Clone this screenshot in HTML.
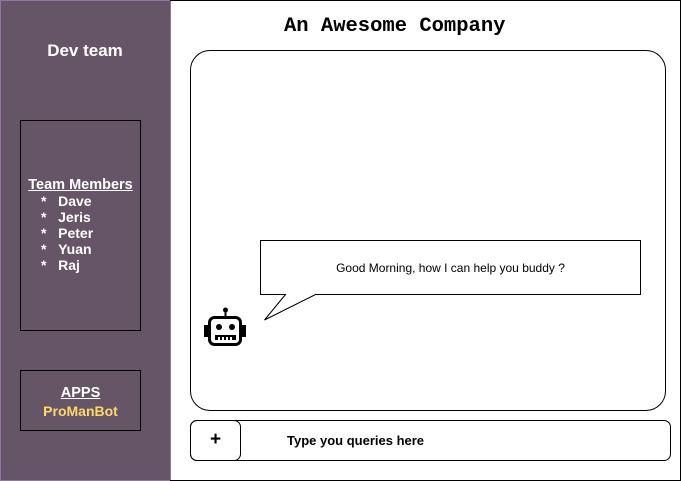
<!DOCTYPE html>
<html><head><style>
body{margin:0;width:681px;height:481px;position:relative;background:#fff;font-family:"Liberation Sans",sans-serif;overflow:hidden}
.side{position:absolute;left:0;top:0;width:171px;height:481px;background:#665566;border:1px solid #9673a6;box-sizing:border-box}
.box{position:absolute;border:1px solid #000;box-sizing:border-box}
</style></head><body>
<div class="side"></div>
<div style="position:absolute;left:170px;top:0;width:511px;height:481px;border:1px solid #000;border-left:none;box-sizing:border-box"></div>
<div style="position:absolute;left:0;width:170px;top:41px;text-align:center;color:#fff;font-weight:bold;font-size:17px">Dev team</div>
<div class="box" style="left:20px;top:120px;width:121px;height:211px"></div>
<div style="position:absolute;left:20px;width:121px;top:177px;text-align:center;color:#fff;font-weight:bold;font-size:14.5px;text-decoration:underline">Team Members</div>
<div style="position:absolute;left:41px;top:193px;color:#fff;font-weight:bold;font-size:14px;line-height:16px">
<div>*&nbsp;&nbsp;&nbsp;Dave</div><div>*&nbsp;&nbsp;&nbsp;Jeris</div><div>*&nbsp;&nbsp;&nbsp;Peter</div><div>*&nbsp;&nbsp;&nbsp;Yuan</div><div>*&nbsp;&nbsp;&nbsp;Raj</div></div>
<div class="box" style="left:20px;top:370px;width:121px;height:61px"></div>
<div style="position:absolute;left:20px;width:121px;top:385px;text-align:center;color:#fff;font-weight:bold;font-size:14.5px;text-decoration:underline">APPS</div>
<div style="position:absolute;left:20px;width:121px;top:403px;text-align:center;color:#ffd966;font-weight:bold;font-size:14px">ProManBot</div>
<div style="position:absolute;left:284px;top:15px;font-family:'Liberation Mono',monospace;font-size:20.5px;font-weight:bold;white-space:nowrap">An Awesome Company</div>
<div class="box" style="left:190px;top:50px;width:476px;height:361px;border-radius:20px"></div>
<svg style="position:absolute;left:0;top:0" width="681" height="481">
<path d="M285.5 294.5 L264.5 320 L315.5 294.5 H640.5 V240.5 H260.5 V294.5 Z" fill="#fff" stroke="#000" stroke-width="1"/>
<circle cx="225.5" cy="310" r="2.5" fill="#000"/>
<rect x="224.5" y="310" width="2" height="6" fill="#000"/>
<rect x="209.5" y="317.5" width="31" height="27" rx="5" fill="none" stroke="#000" stroke-width="3"/>
<rect x="204" y="325" width="4" height="12" fill="#000"/>
<rect x="242" y="325" width="4" height="12" fill="#000"/>
<circle cx="219" cy="327" r="3" fill="#000"/>
<circle cx="232" cy="327" r="3" fill="#000"/>
<rect x="215" y="335" width="21" height="5" fill="#000"/>
<rect x="218" y="337" width="2" height="3" fill="#fff"/><rect x="222" y="337" width="2" height="3" fill="#fff"/><rect x="226" y="337" width="2" height="3" fill="#fff"/><rect x="230" y="337" width="2" height="3" fill="#fff"/>
</svg>
<div style="position:absolute;left:260px;width:381px;top:261px;text-align:center;font-size:12px">Good Morning, how I can help you buddy ?</div>
<div class="box" style="left:190px;top:420px;width:481px;height:41px;border-radius:7px"></div>
<div class="box" style="left:190px;top:420px;width:51px;height:41px;border-radius:7px"></div>
<div style="position:absolute;left:190px;width:51px;top:429px;text-align:center;font-weight:bold;font-size:19px">+</div>
<div style="position:absolute;left:287px;top:433px;font-weight:bold;font-size:13px">Type you queries here</div>
</body></html>
